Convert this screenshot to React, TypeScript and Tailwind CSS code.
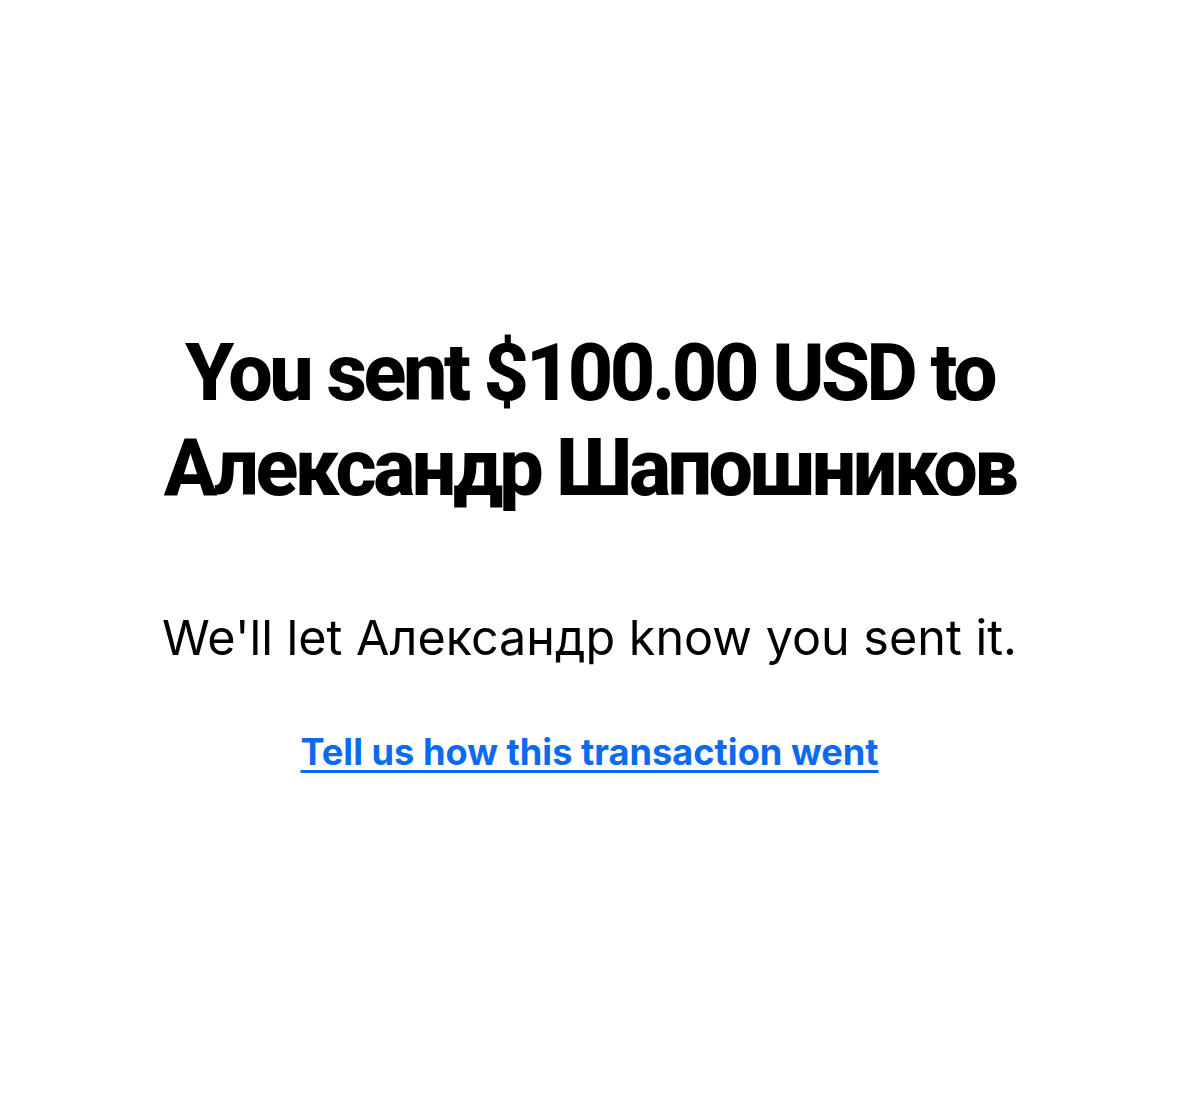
import React from "react";

export default function App() {
  return (
    <div className="min-h-[1099px] w-full bg-white flex flex-col items-center pt-[326px] text-center">
      <h1 className="font-[Roboto,'Noto_Sans',sans-serif] text-[79px] leading-[95px] font-extrabold tracking-[-0.044em] text-black">
        You sent $100.00 USD to
        <br />
        Александр Шапошников
      </h1>
      <p className="mt-[92px] font-[Inter,'Noto_Sans',sans-serif] text-[48.5px] leading-[60px] font-normal text-black">
        We'll let Александр know you sent it.
      </p>
      <a
        href="#"
        className="mt-[62px] font-[Inter,'Noto_Sans',sans-serif] text-[36.2px] leading-[44px] font-bold text-[#0a6bf0] underline underline-offset-[5px] decoration-[3px]"
      >
        Tell us how this transaction went
      </a>
    </div>
  );
}
